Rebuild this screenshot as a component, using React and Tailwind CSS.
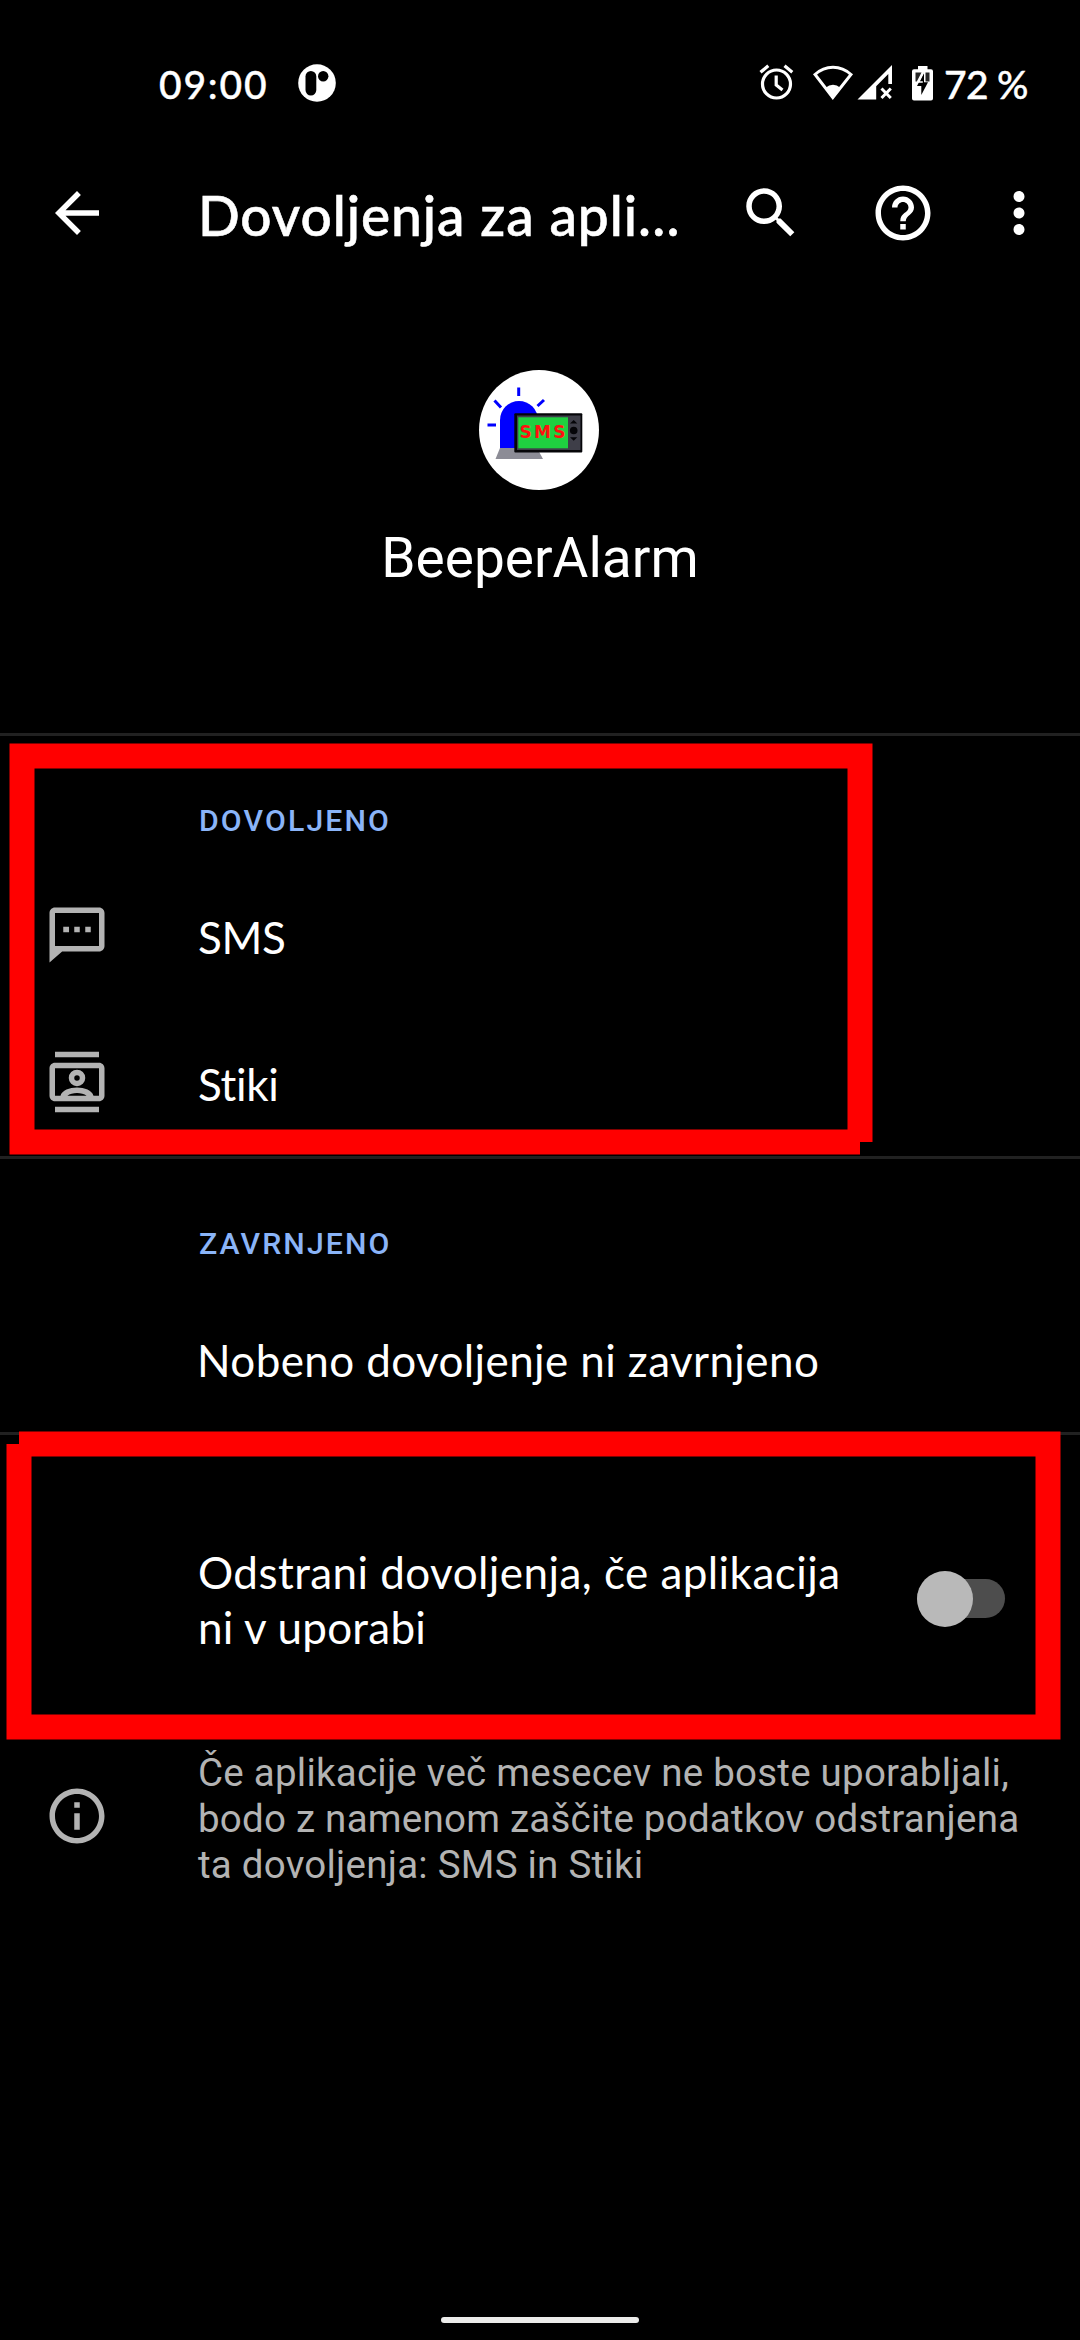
import React from 'react';

const Icon = ({ d, className = '' }) => (
  <svg viewBox="0 0 24 24" className={`block h-[66px] w-[66px] shrink-0 ${className}`} fill="currentColor">
    <path fillRule="evenodd" d={d} />
  </svg>
);

const ICONS = {
  back: 'M20 11H7.83l5.59-5.59L12 4l-8 8 8 8 1.41-1.41L7.83 13H20v-2z',
  search:
    'M15.5 14h-.79l-.28-.27C15.41 12.59 16 11.11 16 9.5 16 5.91 13.09 3 9.5 3S3 5.91 3 9.5 5.91 16 9.5 16c1.61 0 3.09-.59 4.23-1.57l.27.28v.79l5 4.99L20.49 19l-4.99-5zm-6 0C7.01 14 5 11.99 5 9.5S7.01 5 9.5 5 14 7.01 14 9.5 11.99 14 9.5 14z',
  help: 'M11 18h2v-2h-2v2zm1-16C6.48 2 2 6.48 2 12s4.48 10 10 10 10-4.48 10-10S17.52 2 12 2zm0 18c-4.41 0-8-3.59-8-8s3.59-8 8-8 8 3.59 8 8-3.59 8-8 8zm0-14c-2.21 0-4 1.79-4 4h2c0-1.1.9-2 2-2s2 .9 2 2c0 2-3 1.75-3 5h2c0-2.25 3-2.5 3-5 0-2.21-1.79-4-4-4z',
  more: 'M12 8c1.1 0 2-.9 2-2s-.9-2-2-2-2 .9-2 2 .9 2 2 2zm0 2c-1.1 0-2 .9-2 2s.9 2 2 2 2-.9 2-2-.9-2-2-2zm0 6c-1.1 0-2 .9-2 2s.9 2 2 2 2-.9 2-2-.9-2-2-2z',
  sms: 'M20 2H3.99C2.89 2 2 2.9 2 4v18l4.6-4H20c1.1 0 2-.9 2-2V4c0-1.1-.9-2-2-2zM4 4h16v12H4zM7 9h2.1v2H7zM11 9h2v2h-2zM15 9h2v2h-2z',
  contacts:
    'M4 1h16v2H4zM4 21h16v2H4zM4 5h16c1.1 0 2 .9 2 2v10c0 1.1-.9 2-2 2H4c-1.1 0-2-.9-2-2V7c0-1.1.9-2 2-2zM4 7v10h2c.5-2 3.3-3 6-3s5.500 1 6 3h2V7zM12 7.500a3 3 0 1 1 0 6 3 3 0 0 1 0-6zM12 9.500a1 1 0 1 0 0 2 1 1 0 0 0 0-2zM8.500 17h7c-.8-.7-2.200-1-3.500-1s-2.700.3-3.500 1z',
  info: 'M11 7h2v2h-2zM11 11h2v6h-2zM12 2C6.48 2 2 6.48 2 12s4.48 10 10 10 10-4.48 10-10S17.52 2 12 2zm0 18c-4.41 0-8-3.59-8-8s3.59-8 8-8 8 3.59 8 8-3.59 8-8 8z',
};

function StatusBar() {
  return (
    <div className="flex h-[180px] items-start pt-[64px] font-['Lato',sans-serif] text-[39px] font-medium leading-[40px] [-webkit-text-stroke:0.4px_white]">
      <span className="ml-[159px] w-[139px] tracking-[1.8px]">09:00</span>
      <svg viewBox="0 0 38 38" className="block h-[38px] w-[38px]">
        <circle cx="19" cy="19" r="18.800" fill="#fff" />
        <rect x="7.500" y="7" width="10.800" height="24.500" rx="5.400" fill="#000" />
        <circle cx="25.200" cy="12.300" r="5.200" fill="#000" />
      </svg>
      <div className="ml-[422px] flex">
        <svg viewBox="0 0 36 40" className="block h-10 w-9" fill="none" stroke="#fff" strokeWidth="3.200">
          <circle cx="18.500" cy="20" r="14" />
          <path d="M18.200 11.500V21l6.300 5M2.500 8.300l7.800-6.500M26.500 1.800l7.800 6.500" />
        </svg>
        <svg viewBox="0 0 42 40" className="ml-[18px] block h-10 w-[42px]">
          <path d="M3 10.500C13.500.8 28.500.8 39 10.500L20.800 33.500z" fill="none" stroke="#fff" strokeWidth="3" />
          <path d="M14 23.500a10 10 0 0 1 14 0L20.800 35z" fill="#fff" />
        </svg>
        <svg viewBox="0 0 38 40" className="ml-[3px] block h-10 w-[38px]">
          <path fillRule="evenodd" d="M.5 35.500L35 1v19h-3.700V10L19.200 22.200v13.300z" fill="#fff" />
          <path d="M24.500 24.500l9.300 9.500M33.800 24.500L24.500 34" stroke="#fff" strokeWidth="3" />
        </svg>
        <svg viewBox="0 0 22 40" className="ml-[17px] block h-10 w-[22px]">
          <path d="M6 2h9.500v3.300H19a2 2 0 0 1 2 2V34.500a2 2 0 0 1-2 2H2a2 2 0 0 1-2-2V7.300a2 2 0 0 1 2-2h4z" fill="#fff" />
          <path d="M3.500 8.500h6L4.800 17.500H3.500zM17.500 8.500h-4v9h4z" fill="#000" opacity=".85" />
          <path d="M12 8.500L5 22h4.300v9L16 18.300h-4z" fill="#000" />
          <path d="M11.500 8.500L6.800 18h4" fill="none" stroke="#fff" strokeWidth="1.500" />
        </svg>
      </div>
      <span className="ml-[10px] whitespace-nowrap tracking-[-0.7px]">72 %</span>
    </div>
  );
}

function Toolbar() {
  return (
    <div className="flex h-[66px] items-center">
      <Icon d={ICONS.back} className="ml-[44px]" />
      <h1 className="ml-[88px] w-[540px] whitespace-nowrap pt-[3px] font-['Lato',sans-serif] text-[55px] font-medium leading-[66px] tracking-[0.92px] [-webkit-text-stroke:0.6px_white]">
        Dovoljenja za apli…
      </h1>
      <Icon d={ICONS.search} />
      <Icon d={ICONS.help} className="ml-[66px]" />
      <Icon d={ICONS.more} className="ml-[50px]" />
    </div>
  );
}

function AppLogo() {
  return (
    <svg viewBox="0 0 120 120" className="-ml-[2px] block h-[120px] w-[120px]">
      <circle cx="60" cy="60" r="60" fill="#fff" />
      <path d="M39.700 17.500v8.500M15.500 30.500l6.500 7M65 30l-6.500 6M8.500 55h8.500" stroke="#00f" strokeWidth="3" />
      <path d="M21 79V50a19 19 0 0 1 38 0v29z" fill="#00f" />
      <path d="M21 78h37l6 11H16.500z" fill="#8c8c96" />
      <rect x="35.300" y="43.300" width="68" height="39.300" rx="1" fill="#050508" />
      <rect x="38" y="45.500" width="63.500" height="34.500" fill="#3e3e48" />
      <rect x="39.300" y="47.300" width="49.700" height="31" fill="#1fd040" />
      <path d="M91 53.500h7.300L94.700 50zM91 67.300h7.300l-3.600 3.500z" fill="#050508" />
      <circle cx="94.700" cy="60.500" r="3.800" fill="#050508" />
      <text x="40.500" y="68.300" fontFamily="DejaVu Sans, sans-serif" fontWeight="700" fontSize="17" textLength="46" lengthAdjust="spacing" fill="#ff1010">
        SMS
      </text>
    </svg>
  );
}

const SectionTitle = ({ children }) => (
  <h2 className="h-[126px] pl-[199px] pt-[67px] font-['Roboto',sans-serif] text-[30.25px] font-medium leading-[36px] tracking-[2.12px] text-[#8ab4f8]">
    {children}
  </h2>
);

const Row = ({ icon, children, className }) => (
  <div className="flex h-[147px] items-center pl-[44px]">
    <div className="-mt-[2px] h-[66px] w-[154px] text-[#b3b3b3]">{icon && <Icon d={icon} />}</div>
    <span className={`pt-[3px] font-['Lato',sans-serif] text-[44px] leading-[55px] ${className}`}>{children}</span>
  </div>
);

const Divider = () => <div className="h-[3px] bg-[#212121]" />;

export default function App() {
  return (
    <div className="relative flex h-[2340px] w-[1080px] flex-col overflow-hidden bg-black text-white">
      <StatusBar />
      <Toolbar />
      <header className="flex h-[487px] flex-col items-center pt-[124px]">
        <AppLogo />
        <div className="mt-[36px] font-['Roboto',sans-serif] text-[55px] leading-[64px]">BeeperAlarm</div>
      </header>

      <Divider />
      <section>
        <SectionTitle>DOVOLJENO</SectionTitle>
        <Row icon={ICONS.sms} className="tracking-[-0.3px]">SMS</Row>
        <Row icon={ICONS.contacts} className="tracking-[-0.3px]">Stiki</Row>
      </section>
      <Divider />
      <section>
        <SectionTitle>ZAVRNJENO</SectionTitle>
        <Row className="-ml-px tracking-[0.39px]">Nobeno dovoljenje ni zavrnjeno</Row>
      </section>
      <Divider />

      <section className="flex h-[315px] items-start pl-[198px] pt-[110px]">
        <p className="w-[719px] font-['Lato',sans-serif] text-[44px] leading-[55px] tracking-[0.44px]">
          Odstrani dovoljenja, če aplikacija
          <br />
          <span className="tracking-[0.25px]">ni v uporabi</span>
        </p>
        <div className="mt-[25px] flex h-[56px] w-[88px] items-center">
          <div className="h-[39px] w-full rounded-full bg-[#4d4d4d]">
            <div className="-mt-[8px] h-[56px] w-[56px] rounded-full bg-[#b9b9b9]" />
          </div>
        </div>
      </section>

      <section className="flex pl-[44px] text-[#b3b3b3]">
        <Icon d={ICONS.info} className="mt-[33px]" />
        <p className="ml-[88px] whitespace-nowrap font-['Roboto',sans-serif] text-[38.5px] leading-[46px] tracking-[0.24px]">
          Če aplikacije več mesecev ne boste uporabljali,
          <br />
          bodo z namenom zaščite podatkov odstranjena
          <br />
          ta dovoljenja: SMS in Stiki
        </p>
      </section>

      <div className="mx-auto mb-[17px] mt-auto h-[6px] w-[198px] rounded-full bg-[#ebebea]" />

      {/* Highlight frames laid over the list */}
      <svg viewBox="0 0 1080 2340" className="pointer-events-none absolute inset-0 h-full w-full" fill="none" stroke="#f00" strokeWidth="25">
        <path d="M860 1142H22V756H860V1142" />
        <path d="M19 1444H1048V1727H19V1444" />
      </svg>
    </div>
  );
}
